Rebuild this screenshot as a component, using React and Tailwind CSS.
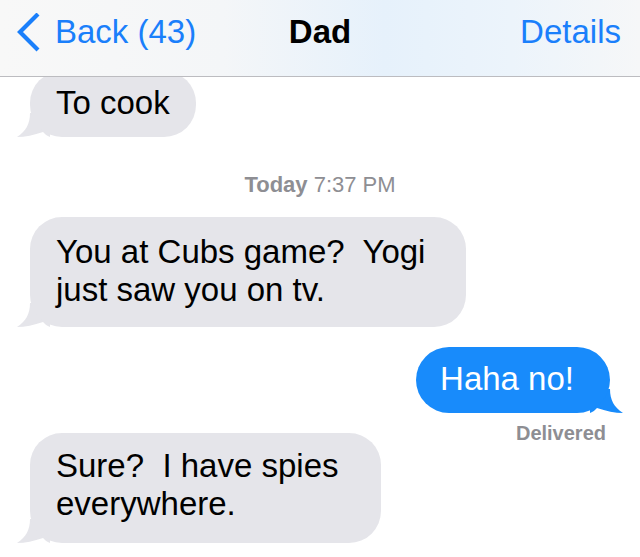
import React from 'react'

function Tail({ color, side }) {
  // little iOS 7 style speech tail, hanging off a bottom corner
  const pos = side === 'left' ? 'left-[-14px]' : 'right-[-14px] -scale-x-100'
  return (
    <svg
      className={`absolute bottom-0 ${pos}`}
      width="34"
      height="24"
      viewBox="0 0 34 24"
    >
      <path
        d="M14,0 C14,11 10,18 1,24 C9,24 18,22 27,19 C29,21 31,23 34,24 L34,0 Z"
        fill={color}
      />
    </svg>
  )
}

function Incoming({ children, className = '', pad = 'pt-[16px] pb-[18px]' }) {
  return (
    <div className={`relative self-start ${className}`}>
      <div className={`relative z-10 rounded-[32px] bg-[#e5e5ea] pl-[26px] pr-[26px] ${pad} text-[33px] leading-[38px] text-black whitespace-pre-wrap`}>
        {children}
      </div>
      <Tail color="#e5e5ea" side="left" />
    </div>
  )
}

export default function App() {
  return (
    <div className="w-[640px] h-[557px] overflow-hidden bg-white font-['Liberation_Sans',Arial,sans-serif] antialiased">
      {/* Nav bar */}
      <header className="relative z-20 h-[77px] grid grid-cols-3 pt-[13px] border-b border-[#bcbcc0] bg-[linear-gradient(90deg,#f8f8f8_0%,#f4f6f8_35%,#e6f1fb_60%,#ecf4fb_80%,#f6f7f8_100%)]">
        <div className="flex items-start pl-[17px]">
          <svg width="26" height="40" viewBox="0 0 26 40" className="shrink-0">
            <polyline
              points="21,1 3,19 21,37"
              fill="none"
              stroke="#1a7ffb"
              strokeWidth="4.2"
              strokeLinecap="butt"
              strokeLinejoin="miter"
            />
          </svg>
          <span className="ml-[12px] text-[33px] leading-[38px] text-[#1a7ffb]">Back (43)</span>
        </div>
        <div className="text-center text-[33px] leading-[38px] font-bold text-black">Dad</div>
        <div className="text-right pr-[19px] text-[33px] leading-[38px] text-[#1a7ffb]">Details</div>
      </header>

      {/* Conversation */}
      <main className="flex flex-col px-[30px]">
        <Incoming className="-mt-[6px]" pad="pt-[13px] pb-[15px]">To cook</Incoming>

        <div className="mt-[35px] text-center text-[22px] leading-[25px] text-[#8e8e93]">
          <span className="font-bold">Today</span> 7:37 PM
        </div>

        <Incoming className="mt-[20px] max-w-[436px]">{'You at Cubs game?  Yogi just saw you on tv.'}</Incoming>

        <div className="relative self-end mt-[20px]">
          <div className="relative z-10 rounded-[33px] bg-[#188bfb] pl-[24px] pr-[36px] pt-[13px] pb-[15px] text-[33px] leading-[38px] text-white">
            Haha no!
          </div>
          <Tail color="#188bfb" side="right" />
        </div>

        <div className="mt-[8px] mr-[4px] text-right text-[20px] leading-[24px] font-bold text-[#8e8e93]">
          Delivered
        </div>

        <Incoming className="-mt-[12px] max-w-[351px]" pad="pt-[14px] pb-[20px]">
          {'Sure?  I have spies everywhere.'}
        </Incoming>
      </main>
    </div>
  )
}
